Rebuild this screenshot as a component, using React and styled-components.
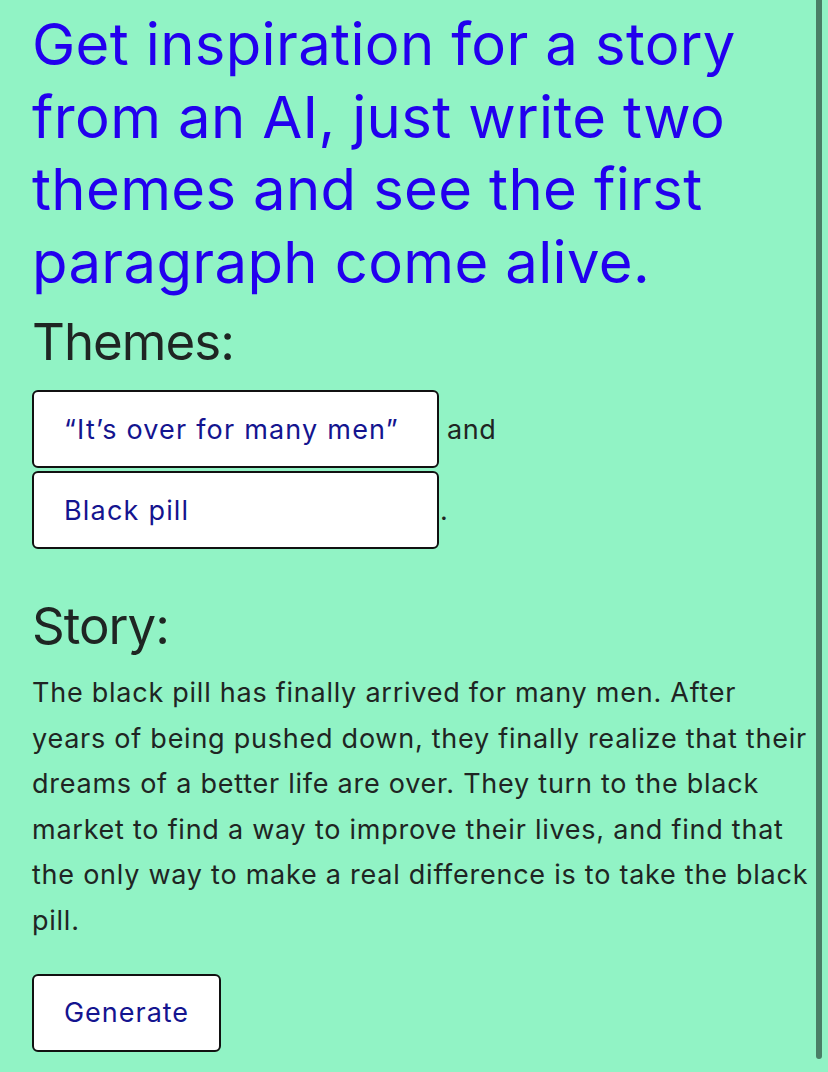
import React, { useState } from "react";
import styled, { createGlobalStyle } from "styled-components";

const GlobalStyle = createGlobalStyle`
  html, body {
    margin: 0;
    padding: 0;
    background: #91f3c5;
  }
  body {
    font-family: Inter, "Open Sans", sans-serif;
    color: #1f2523;
  }
`;

const Page = styled.main`
  position: relative;
  min-height: 1072px;
  padding: 8px 6px 0 32px;
  box-sizing: border-box;
  overflow: hidden;
`;

const Title = styled.h1`
  margin: 0;
  padding-right: 26px;
  font-size: 58px;
  line-height: 72.5px;
  font-weight: 400;
  letter-spacing: 0.35px;
  color: #2200ee;
`;

const Heading = styled.h2`
  margin: ${(p) => p.$top || 0}px 0 0 0;
  font-size: 51px;
  line-height: 68px;
  font-weight: 400;
  letter-spacing: -1px;
  color: #1f2523;
`;

const Themes = styled.div`
  display: flex;
  flex-direction: column;
  gap: 3px;
  margin-top: 14px;
`;

const ThemeRow = styled.div`
  display: flex;
  align-items: baseline;
  font-size: 27px;
  letter-spacing: 0.6px;
`;

const Joiner = styled.span`
  margin-left: ${(p) => p.$gap}px;
`;

const Field = styled.input`
  width: 407px;
  height: 78px;
  box-sizing: border-box;
  padding: 0 30px;
  border: 2px solid #111;
  border-radius: 6px;
  background: #fff;
  font-family: inherit;
  font-size: 27px;
  letter-spacing: 1.2px;
  color: #14148f;
  outline: none;
`;

const Story = styled.p`
  margin: 10px 0 0 0;
  font-size: 27px;
  line-height: 45.6px;
  letter-spacing: 0.75px;
  color: #1f2523;
`;

const Button = styled.button`
  margin-top: 30px;
  width: 189px;
  height: 78px;
  box-sizing: border-box;
  border: 2px solid #111;
  border-radius: 6px;
  background: #fff;
  font-family: inherit;
  font-size: 27px;
  letter-spacing: 1px;
  color: #14148f;
  cursor: pointer;
`;

const ScrollThumb = styled.div`
  position: absolute;
  top: 0;
  right: 6px;
  width: 6px;
  height: 1059px;
  border-radius: 0 0 3px 3px;
  background: #4a7e66;
`;

const storyLines = [
  "The black pill has finally arrived for many men. After",
  "years of being pushed down, they finally realize that their",
  "dreams of a better life are over. They turn to the black",
  "market to find a way to improve their lives, and find that",
  "the only way to make a real difference is to take the black",
  "pill.",
];

export default function App() {
  const [first, setFirst] = useState("“It’s over for many men”");
  const [second, setSecond] = useState("Black pill");

  return (
    <>
      <GlobalStyle />
      <Page>
        <Title>
          Get inspiration for a story from an AI, just write two themes and see
          the first paragraph come alive.
        </Title>
        <Heading $top={10}>Themes:</Heading>
        <Themes>
          <ThemeRow>
            <Field value={first} onChange={(e) => setFirst(e.target.value)} />
            <Joiner $gap={8}>and</Joiner>
          </ThemeRow>
          <ThemeRow>
            <Field value={second} onChange={(e) => setSecond(e.target.value)} />
            <Joiner $gap={1}>.</Joiner>
          </ThemeRow>
        </Themes>
        <Heading $top={43}>Story:</Heading>
        <Story>
          {storyLines.map((line, i) => (
            <React.Fragment key={i}>
              {line}
              {i < storyLines.length - 1 && <br />}
            </React.Fragment>
          ))}
        </Story>
        <Button>Generate</Button>
        <ScrollThumb />
      </Page>
    </>
  );
}
